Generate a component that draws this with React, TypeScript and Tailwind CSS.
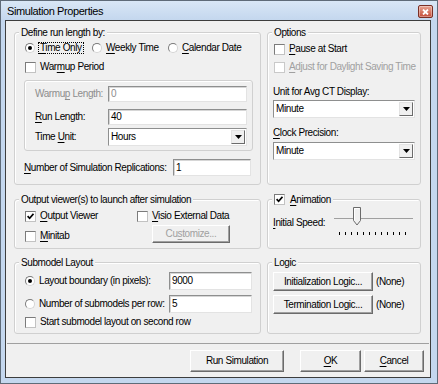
import type { ReactNode } from "react";

function K({ children }: { children: ReactNode }) {
  return <span className="underline decoration-1 underline-offset-2">{children}</span>;
}

function Check({ on = false, off = false }: { on?: boolean; off?: boolean }) {
  return (
    <span
      className={`flex h-[11px] w-[11px] shrink-0 items-center justify-center border bg-white ${
        off ? "border-[#c9c9c9]" : "border-t-[#7b7b7b] border-l-[#7b7b7b] border-r-[#c2c2c2] border-b-[#c2c2c2]"
      }`}
    >
      {on && (
        <svg width="7" height="7" viewBox="0 0 7 7">
          <path d="M0.6 3.2 L2.6 5.3 L6.5 0.8" stroke="#000" strokeWidth="1.7" fill="none" />
        </svg>
      )}
    </span>
  );
}

function Radio({ on = false }: { on?: boolean }) {
  return (
    <span className="flex h-[10px] w-[10px] shrink-0 items-center justify-center rounded-full border border-t-[#7b7b7b] border-l-[#7b7b7b] border-r-[#d4d4d4] border-b-[#d4d4d4] bg-white">
      {on && <span className="h-[4px] w-[4px] rounded-full bg-black" />}
    </span>
  );
}

function Field({ value, grey = false, className = "" }: { value: string; grey?: boolean; className?: string }) {
  return (
    <div
      className={`flex shrink-0 items-center border border-t-[#8e8f8f] border-l-[#8e8f8f] border-r-[#e3e3e3] border-b-[#e3e3e3] bg-white pl-[2px] shadow-[inset_1px_1px_0_#d6d6d6] ${
        grey ? "text-[#8d8d8d]" : ""
      } ${className}`}
    >
      {value}
    </div>
  );
}

function Combo({ value, className = "" }: { value: string; className?: string }) {
  return (
    <div
      className={`flex shrink-0 items-center border border-t-[#8e8f8f] border-l-[#8e8f8f] border-r-[#e3e3e3] border-b-[#e3e3e3] bg-white pl-[2px] ${className}`}
    >
      <span className="flex-1">{value}</span>
      <span className="mr-[1px] flex h-[14px] w-[14px] items-center justify-center border border-t-[#e3e3e3] border-l-[#e3e3e3] border-r-[#6b6b6b] border-b-[#6b6b6b] bg-[#f0f0f0]">
        <svg width="7" height="4" viewBox="0 0 7 4">
          <path d="M0 0H7L3.5 4Z" fill="#000" />
        </svg>
      </span>
    </div>
  );
}

function Btn({ children, off = false, className = "" }: { children: ReactNode; off?: boolean; className?: string }) {
  return (
    <div
      className={`flex shrink-0 items-center justify-center border border-t-white border-l-white border-r-[#6b6b6b] border-b-[#6b6b6b] bg-[#f0f0f0] shadow-[inset_-1px_-1px_0_#a0a0a0] ${
        off ? "text-[#a0a0a0]" : ""
      } ${className}`}
    >
      {children}
    </div>
  );
}

function Group({ title, className = "", children }: { title?: ReactNode; className?: string; children?: ReactNode }) {
  return (
    <div className={`relative shrink-0 rounded-[3px] border border-[#d0d0d0] shadow-[inset_1px_1px_0_#fff] ${className}`}>
      {title && (
        <div className="absolute -top-[7px] left-[4px] flex h-[13px] items-center gap-[5px] bg-[#f0f0f0] px-[2px]">
          {title}
        </div>
      )}
      {children}
    </div>
  );
}

function Row({ children, className = "" }: { children: ReactNode; className?: string }) {
  return <div className={`flex h-[14px] items-center ${className}`}>{children}</div>;
}

function Slider() {
  const ticks = Array.from({ length: 12 }, (_, i) => 5 + i * 6);
  return (
    <div className="relative h-[29px] w-[79px]">
      <div className="absolute left-0 right-0 top-[11px] h-[2px] border-t border-[#a0a0a0] border-b-white" />
      <svg className="absolute left-[19px] top-0" width="8" height="19" viewBox="0 0 8 19">
        <path d="M0.5 0.5H7.5V13.5L4 18L0.5 13.5Z" fill="#f0f0f0" stroke="#6b6b6b" />
        <path d="M1.5 13V1.5H6.5" fill="none" stroke="#fff" />
      </svg>
      <svg className="absolute left-0 top-[25px]" width="79" height="4" viewBox="0 0 79 4">
        {ticks.map((x) => (
          <rect key={x} x={x} y={0} width={1} height={3} fill="#000" />
        ))}
      </svg>
    </div>
  );
}

export default function App() {
  return (
    <div className="font-['Liberation_Sans',Arial,Helvetica,sans-serif] text-[10px] leading-[12px] tracking-[-0.4px] text-black">
      <div className="flex h-[384px] w-[438px] flex-col border border-[#5f6b78] bg-[#c4d7ee]">
        <div className="flex h-[19px] shrink-0 bg-gradient-to-b from-[#d9e7f6] to-[#c4d7ee]">
          <span className="mt-[3px] pl-[6px] text-[11px] leading-[14px]">Simulation Properties</span>
          <div className="ml-auto mr-[4px] mt-[4px] flex h-[13px] w-[15px] items-center justify-center rounded-[2px] border border-[#7a2f25] bg-gradient-to-b from-[#e8a593] to-[#c34b38] shadow-[inset_0_0_0_1px_rgba(255,255,255,0.35)]">
            <svg width="7" height="6" viewBox="0 0 7 6">
              <path d="M1 0.5L6 5.5M6 0.5L1 5.5" stroke="#fff" strokeWidth="1.8" />
            </svg>
          </div>
        </div>
        <div className="flex flex-1 flex-col pb-[5px] pl-[4px] pr-[6px]">
          <div className="flex flex-1 flex-col border border-[#3d3d3d] bg-[#f0f0f0]">
            {/* top row */}
            <div className="ml-[8px] mt-[11px] flex gap-[6px]">
              <Group title="Define run length by:" className="h-[153px] w-[247px]">
                <div className="flex flex-col pl-[10px] pt-[8px]">
                  <Row>
                    <div className="flex w-[67px] items-center gap-[3px]">
                      <Radio on />
                      <span className="border border-dotted border-black px-[1px] leading-[10px]">
                        <K>T</K>ime Only
                      </span>
                    </div>
                    <div className="flex w-[76px] items-center gap-[4px]">
                      <Radio />
                      <span>
                        <K>W</K>eekly Time
                      </span>
                    </div>
                    <div className="flex items-center gap-[4px]">
                      <Radio />
                      <span>
                        <K>C</K>alendar Date
                      </span>
                    </div>
                  </Row>
                  <Row className="mt-[5px] gap-[4px]">
                    <Check />
                    <span>
                      War<K>m</K>up Period
                    </span>
                  </Row>
                </div>
                <div className="ml-[9px] mt-[6px] flex h-[71px] w-[229px] flex-col rounded-[3px] border border-[#d0d0d0] pl-[10px] pt-[5px] shadow-[inset_1px_1px_0_#fff]">
                  <div className="flex h-[16px] items-center">
                    <span className="w-[73px] text-[#8d8d8d]">
                      Warmu<K>p</K> Length:
                    </span>
                    <Field value="0" grey className="h-[16px] w-[139px]" />
                  </div>
                  <div className="mt-[7px] flex h-[16px] items-center">
                    <span className="w-[73px]">
                      <K>R</K>un Length:
                    </span>
                    <Field value="40" className="h-[16px] w-[139px]" />
                  </div>
                  <div className="mt-[3px] flex h-[18px] items-center">
                    <span className="w-[73px]">
                      Time <K>U</K>nit:
                    </span>
                    <Combo value="Hours" className="h-[18px] w-[139px]" />
                  </div>
                </div>
                <div className="ml-[9px] mt-[8px] flex h-[17px] items-center">
                  <span className="w-[149px]">
                    <K>N</K>umber of Simulation Replications:
                  </span>
                  <Field value="1" className="h-[17px] w-[78px]" />
                </div>
              </Group>

              <Group title="Options" className="h-[153px] w-[154px]">
                <div className="flex flex-col pl-[6px] pt-[9px]">
                  <Row className="gap-[4px]">
                    <Check />
                    <span>
                      <K>P</K>ause at Start
                    </span>
                  </Row>
                  <Row className="mt-[4px] gap-[4px] text-[#a0a0a0]">
                    <Check off />
                    <span>
                      <K>A</K>djust for Daylight Saving Time
                    </span>
                  </Row>
                </div>
                <div className="flex flex-col pl-[5px]">
                  <Row className="mt-[11px]">Unit for Avg CT Display:</Row>
                  <Combo value="Minute" className="mt-[1px] h-[18px] w-[142px]" />
                  <Row className="mt-[8px]">
                    <span>
                      <K>C</K>lock Precision:
                    </span>
                  </Row>
                  <Combo value="Minute" className="mt-[2px] h-[18px] w-[142px]" />
                </div>
              </Group>
            </div>

            {/* middle row */}
            <div className="ml-[8px] mt-[14px] flex gap-[6px]">
              <Group title="Output viewer(s) to launch after simulation" className="h-[50px] w-[247px]">
                <div className="flex pl-[10px] pt-[9px]">
                  <div className="flex w-[112px] flex-col">
                    <Row className="gap-[4px]">
                      <Check on />
                      <span>
                        <K>O</K>utput Viewer
                      </span>
                    </Row>
                    <Row className="mt-[6px] gap-[4px]">
                      <Check />
                      <span>
                        <K>M</K>initab
                      </span>
                    </Row>
                  </div>
                  <div className="flex flex-col">
                    <Row className="gap-[4px]">
                      <Check />
                      <span>
                        <K>V</K>isio External Data
                      </span>
                    </Row>
                    <Btn off className="ml-[15px] mt-[2px] h-[18px] w-[78px]">
                      <span>
                        Cu<K>s</K>tomize...
                      </span>
                    </Btn>
                  </div>
                </div>
              </Group>

              <Group
                title={
                  <>
                    <Check on />
                    <span>
                      <K>A</K>nimation
                    </span>
                  </>
                }
                className="h-[50px] w-[154px]"
              >
                <div className="flex items-start pl-[5px] pt-[7px]">
                  <span className="mt-[10px] w-[61px]">
                    <K>I</K>nitial Speed:
                  </span>
                  <Slider />
                </div>
              </Group>
            </div>

            {/* bottom row */}
            <div className="ml-[8px] mt-[13px] flex gap-[6px]">
              <Group title="Submodel Layout" className="h-[72px] w-[247px]">
                <div className="flex flex-col pl-[10px] pt-[9px]">
                  <div className="flex h-[18px] items-center">
                    <div className="flex w-[144px] items-center gap-[4px]">
                      <Radio on />
                      <span>Layout boundary (in pixels):</span>
                    </div>
                    <Field value="9000" className="h-[18px] w-[83px]" />
                  </div>
                  <div className="mt-[5px] flex h-[18px] items-center">
                    <div className="flex w-[144px] items-center gap-[4px]">
                      <Radio />
                      <span>Number of submodels per row:</span>
                    </div>
                    <Field value="5" className="h-[18px] w-[83px]" />
                  </div>
                  <Row className="mt-[2px] gap-[4px]">
                    <Check />
                    <span>Start submodel layout on second row</span>
                  </Row>
                </div>
              </Group>

              <Group title="Logic" className="h-[72px] w-[154px]">
                <div className="flex flex-col pl-[5px] pt-[9px]">
                  <div className="flex items-center gap-[3px]">
                    <Btn className="h-[19px] w-[100px]">Initialization Logic...</Btn>
                    <span>(None)</span>
                  </div>
                  <div className="mt-[4px] flex items-center gap-[3px]">
                    <Btn className="h-[19px] w-[100px]">Termination Logic...</Btn>
                    <span>(None)</span>
                  </div>
                </div>
              </Group>
            </div>

            <div className="mx-[1px] mt-[9px] h-[2px] shrink-0 border-t border-[#a0a0a0] border-b-white" />

            <div className="mt-[5px] flex justify-end pr-[6px]">
              <Btn className="h-[22px] w-[94px]">Run Simulation</Btn>
              <Btn className="ml-[16px] h-[22px] w-[61px]">
                <span>
                  <K>O</K>K
                </span>
              </Btn>
              <Btn className="ml-[3px] h-[22px] w-[60px]">
                <span>
                  <K>C</K>ancel
                </span>
              </Btn>
            </div>
          </div>
        </div>
      </div>
    </div>
  );
}
